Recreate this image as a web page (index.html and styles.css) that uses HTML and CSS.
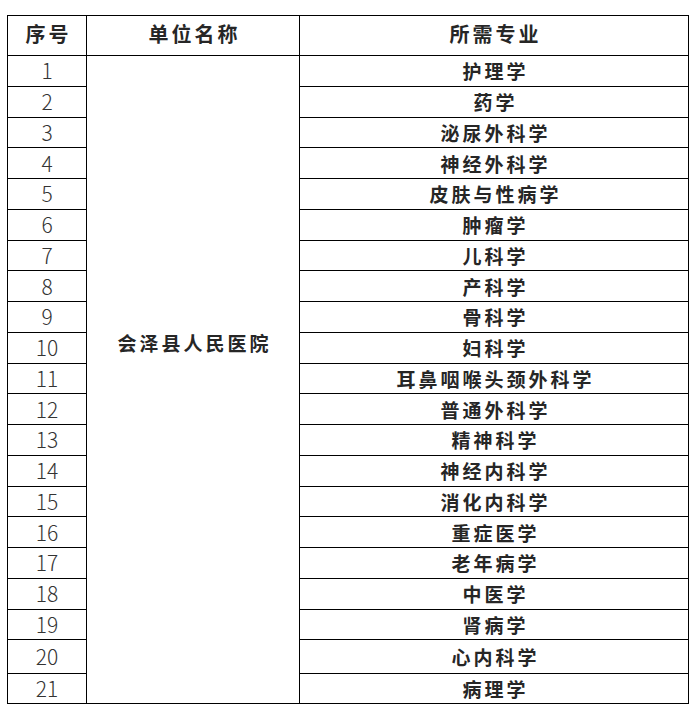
FILE: index.html
```html
<!DOCTYPE html>
<html lang="zh-CN">
<head>
<meta charset="utf-8">
<title>会泽县人民医院 所需专业</title>
<link rel="stylesheet" href="styles.css">
</head>
<body>
<table class="grid">
  <colgroup>
    <col class="c-no">
    <col class="c-unit">
    <col class="c-major">
  </colgroup>
  <thead>
    <tr class="head">
      <th>序号</th>
      <th>单位名称</th>
      <th>所需专业</th>
    </tr>
  </thead>
  <tbody>
    <tr><td class="no">1</td><td class="unit" rowspan="21">会泽县人民医院</td><td class="major">护理学</td></tr>
    <tr><td class="no">2</td><td class="major">药学</td></tr>
    <tr><td class="no">3</td><td class="major">泌尿外科学</td></tr>
    <tr><td class="no">4</td><td class="major">神经外科学</td></tr>
    <tr><td class="no">5</td><td class="major">皮肤与性病学</td></tr>
    <tr><td class="no">6</td><td class="major">肿瘤学</td></tr>
    <tr><td class="no">7</td><td class="major">儿科学</td></tr>
    <tr><td class="no">8</td><td class="major">产科学</td></tr>
    <tr><td class="no">9</td><td class="major">骨科学</td></tr>
    <tr><td class="no">10</td><td class="major">妇科学</td></tr>
    <tr><td class="no">11</td><td class="major">耳鼻咽喉头颈外科学</td></tr>
    <tr><td class="no">12</td><td class="major">普通外科学</td></tr>
    <tr><td class="no">13</td><td class="major">精神科学</td></tr>
    <tr><td class="no">14</td><td class="major">神经内科学</td></tr>
    <tr><td class="no">15</td><td class="major">消化内科学</td></tr>
    <tr><td class="no">16</td><td class="major">重症医学</td></tr>
    <tr><td class="no">17</td><td class="major">老年病学</td></tr>
    <tr><td class="no">18</td><td class="major">中医学</td></tr>
    <tr><td class="no">19</td><td class="major">肾病学</td></tr>
    <tr class="tall"><td class="no">20</td><td class="major">心内科学</td></tr>
    <tr class="last"><td class="no">21</td><td class="major">病理学</td></tr>
  </tbody>
</table>
</body>
</html>
```

FILE: styles.css
```css
html, body {
  margin: 0;
  padding: 0;
  background: #ffffff;
}

body {
  padding: 15px 0 0 7px;
  font-family: "Noto Sans CJK SC", "Noto Sans", sans-serif;
  color: #222222;
}

.grid {
  border-collapse: collapse;
  table-layout: fixed;
  width: 681px;
}

.c-no { width: 79px; }
.c-unit { width: 213px; }
.c-major { width: 389px; }

.grid th,
.grid td {
  border: 1px solid #000000;
  padding: 0;
  text-align: center;
  vertical-align: middle;
  line-height: 1;
}

.head {
  height: 40px;
}

.grid th {
  font-size: 20px;
  font-weight: 700;
  letter-spacing: 3px;
  text-indent: 3px;
  color: #262626;
  padding-bottom: 4px;
}

.grid tbody tr {
  height: 30.75px;
}

.grid tbody tr.tall {
  height: 34px;
}

.grid tbody tr.last {
  height: 30px;
}

.no {
  font-size: 21px;
  font-weight: 300;
  color: #333333;
  padding-top: 3px;
}

.major {
  font-size: 19px;
  font-weight: 700;
  letter-spacing: 3px;
  text-indent: 3px;
  padding-top: 4px;
  color: #262626;
}

.grid td.unit {
  font-size: 19px;
  font-weight: 700;
  letter-spacing: 3px;
  text-indent: 3px;
  vertical-align: top;
  padding-top: 277px;
  color: #262626;
}
```
